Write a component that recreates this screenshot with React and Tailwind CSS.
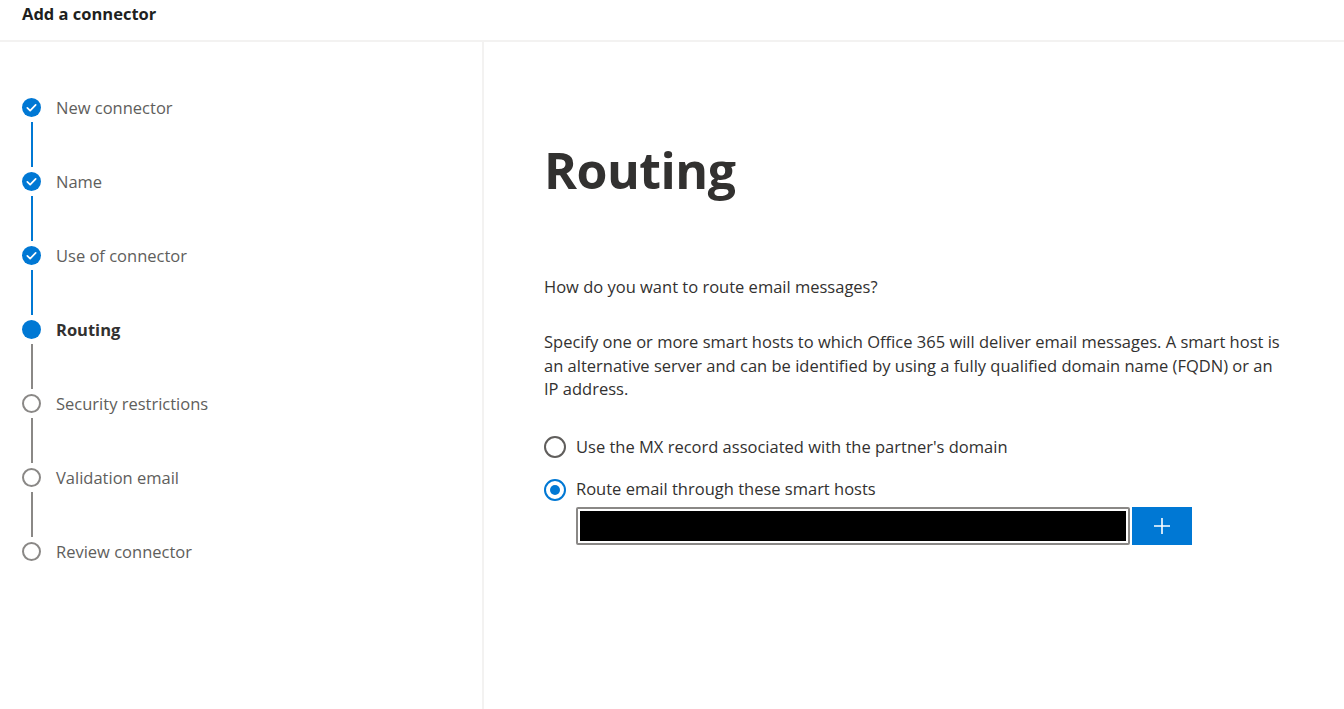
const steps = [
  { label: 'New connector', state: 'done' },
  { label: 'Name', state: 'done' },
  { label: 'Use of connector', state: 'done' },
  { label: 'Routing', state: 'current' },
  { label: 'Security restrictions', state: 'todo' },
  { label: 'Validation email', state: 'todo' },
  { label: 'Review connector', state: 'todo' },
]

function StepIcon({ state }) {
  if (state === 'done') {
    return (
      <svg width="19" height="19" viewBox="0 0 20 20">
        <circle cx="10" cy="10" r="10" fill="#0078d4" />
        <path d="M5.6 10.3l3 2.9 5.8-6" fill="none" stroke="#fff" strokeWidth="1.8" strokeLinecap="round" strokeLinejoin="round" />
      </svg>
    )
  }
  if (state === 'current') {
    return <div className="w-[19px] h-[19px] rounded-full bg-[#0078d4]" />
  }
  return <div className="w-[19px] h-[19px] rounded-full border-2 border-[#8a8886] bg-white" />
}

function Stepper() {
  return (
    <ol className="pt-[56px] pl-[22px]">
      {steps.map((s, i) => {
        const last = i === steps.length - 1
        return (
          <li key={s.label} className="flex">
            <div className="flex flex-col items-center w-[19px]">
              <StepIcon state={s.state} />
              {!last && <div className={`w-[2px] h-[45px] my-[5px] ${i < 3 ? 'bg-[#0078d4]' : 'bg-[#8a8886]'}`} />}
            </div>
            <span
              className={`ml-[15px] text-[16.5px] leading-[19px] ${s.state === 'current' ? 'font-bold text-[#323130]' : 'text-[#605e5c]'}`}
            >
              {s.label}
            </span>
          </li>
        )
      })}
    </ol>
  )
}

function Radio({ checked, label }) {
  return (
    <label className="flex items-center gap-[10px]">
      <span className={`w-[22px] h-[22px] rounded-full border-2 flex items-center justify-center ${checked ? 'border-[#0078d4]' : 'border-[#605e5c]'}`}>
        {checked && <span className="w-[10px] h-[10px] rounded-full bg-[#0078d4]" />}
      </span>
      <span className="text-[16.5px] text-[#323130]">{label}</span>
    </label>
  )
}

export default function App() {
  return (
    <div className="w-[1344px] h-[709px] bg-white overflow-hidden font-['Open_Sans',sans-serif] text-[#323130]">
      <header className="h-[42px] border-b-2 border-[#f3f2f1] flex items-center pl-[22px]">
        <h1 className="text-[16.5px] font-bold text-[#201f1e] -mt-[12px]">Add a connector</h1>
      </header>
      <div className="flex h-[667px]">
        <aside className="w-[485px] border-r-2 border-[#f3f2f1]">
          <Stepper />
        </aside>
        <main className="flex-1 pl-[60px] pr-[60px]">
          <h2 className="mt-[96px] text-[50px] font-bold leading-[64px] text-[#323130] tracking-[-0.5px]">Routing</h2>
          <p className="mt-[74px] text-[16.5px] leading-[22px] text-[#323130]">How do you want to route email messages?</p>
          <p className="mt-[32px] w-[740px] text-[16.5px] leading-[23.5px] text-[#323130]">
            Specify one or more smart hosts to which Office 365 will deliver email messages. A smart host is an alternative server and can be identified by using a fully qualified domain name (FQDN) or an IP address.
          </p>
          <div className="mt-[34px] flex flex-col gap-[18px]">
            <Radio label="Use the MX record associated with the partner's domain" />
            <Radio checked label="Route email through these smart hosts" />
          </div>
          <div className="mt-[5px] ml-[32px] flex">
            <div className="w-[554px] h-[38px] border-2 border-[#8a8886] rounded-[2px] bg-white p-[2px]">
              <div className="w-full h-full bg-black" />
            </div>
            <button className="ml-[2px] w-[60px] h-[38px] bg-[#0078d4] flex items-center justify-center">
              <svg width="20" height="20" viewBox="0 0 20 20">
                <path d="M10 2v16M2 10h16" stroke="#fff" strokeWidth="1.6" />
              </svg>
            </button>
          </div>
        </main>
      </div>
    </div>
  )
}
